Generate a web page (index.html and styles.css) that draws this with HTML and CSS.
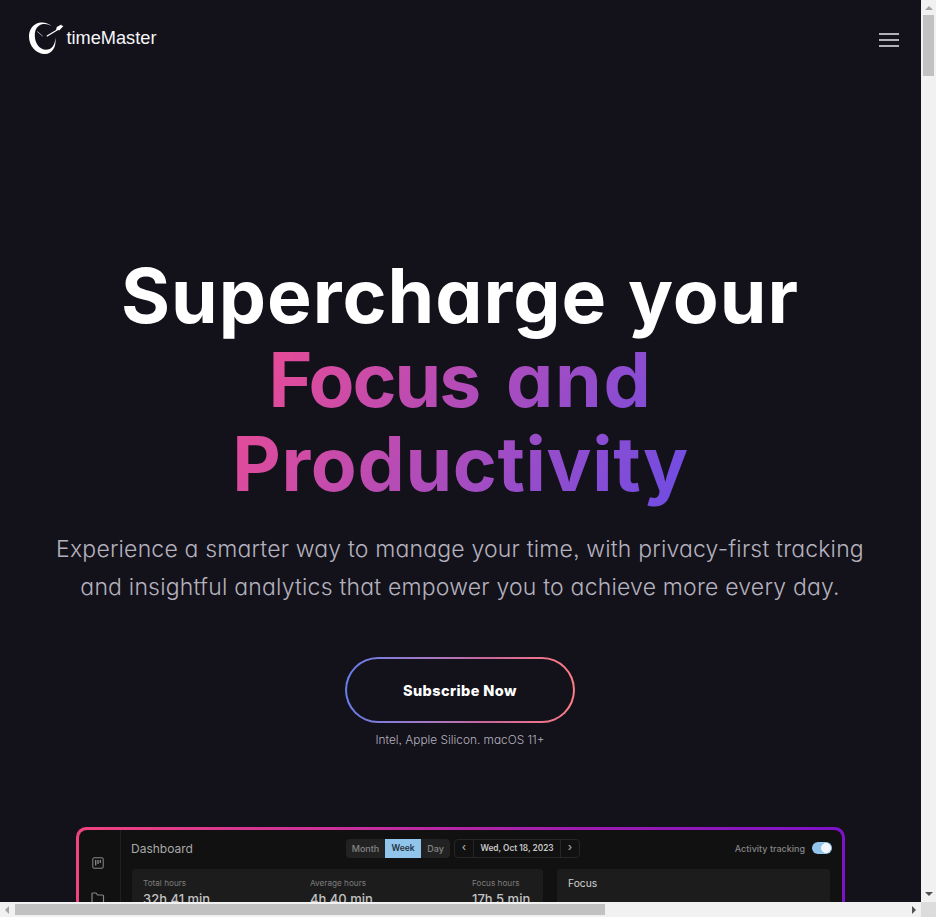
FILE: index.html
```html
<!DOCTYPE html>
<html lang="en">
<head>
<meta charset="utf-8">
<title>timeMaster</title>
<link rel="stylesheet" href="styles.css">
</head>
<body>
<main class="viewport">
  <header class="nav">
    <a class="brand">
      <svg class="mark" width="36" height="34" viewBox="0 0 36 34">
        <path d="M23.500 5.300C20 1.500 15 .8 11 1.800C4.500 3.500 1 9 1 15.500C1 25 8 33 17 33C24 33 28.800 26 27.300 16.500C27.300 24 23.500 28.800 18 28.800C11.500 28.800 6.800 22 6.800 14.500C6.800 8.500 9.500 4.500 14 3.300C17.500 2.400 20.500 3.300 23.500 5.300Z" fill="#fff"/>
        <path d="M18.700 15.300L29.500 8.800" stroke="#fff" stroke-width="1.300"/>
        <path d="M28 8.900L28.800 6L33.300 3.600L33.500 4.600L35.400 5L31.500 9.200Z" fill="#fff"/>
        <path d="M9.300 10.500L14.700 15.200" stroke="#a3a2a9" stroke-width="1"/>
      </svg>
      <span>timeMaster</span>
    </a>
    <div class="burger"><i></i><i></i><i></i></div>
  </header>
  <section class="hero">
    <h1><span class="line l1">Supercharge your</span><span class="grad"><span class="line l2"><span class="tight">Focus</span> <span class="loose">and</span></span><span class="line l3">Productivity</span></span></h1>
    <p class="lead"><span class="p1">Experience a smarter way to manage your time, with privacy-first tracking</span><span class="p2">and insightful analytics that empower you to achieve more every day.</span></p>
    <a class="cta"><span>Subscribe Now</span></a>
    <p class="note"><span>Intel, Apple Silicon. macOS 11+</span></p>
  </section>
  <section class="shot">
    <div class="app">
      <aside class="side">
        <svg width="12" height="12" viewBox="0 0 12 12" fill="none" stroke="#8b8b8b"><rect x=".8" y=".8" width="10.400" height="10.400" rx="1"/><path d="M3.700 3v5.500M6 3v4M8.300 3v3" stroke-width="1.300"/></svg>
        <svg width="14" height="12" viewBox="0 0 14 12" fill="none" stroke="#858585" stroke-width="1.200"><path d="M1 11V2Q1 1 2 1H5L6.500 3H11.500Q12.500 3 12.500 4V11Z"/></svg>
      </aside>
      <div class="content">
        <div class="bar">
          <span class="title">Dashboard</span>
          <div class="tabs"><span>Month</span><span class="on">Week</span><span>Day</span></div>
          <div class="date"><span>‹</span><b>Wed, Oct 18, 2023</b><span>›</span></div>
          <span class="track">Activity tracking</span><i class="toggle"></i>
        </div>
        <div class="cards">
          <div class="card stats">
            <div><small>Total hours</small><strong>32h 41 min</strong></div>
            <div><small>Average hours</small><strong>4h 40 min</strong></div>
            <div><small>Focus hours</small><strong>17h 5 min</strong></div>
          </div>
          <div class="card focus">Focus</div>
        </div>
      </div>
    </div>
  </section>
</main>
<div class="vbar"><i class="up"></i><i class="vthumb"></i><i class="down"></i></div>
<div class="hbar"><i class="left"></i><i class="hthumb"></i><i class="right"></i></div>
<div class="corner"></div>
</body>
</html>
```
FILE: styles.css
```css
* { box-sizing: border-box; }
body { margin: 0; width: 936px; height: 917px; overflow: hidden; display: grid; grid-template: 902px 15px / 921px 15px; background: #13111a; color: #fff; font-family: Inter, "Liberation Sans", sans-serif; }
.viewport { overflow: hidden; background: #13111a; display: flex; flex-direction: column; }
.nav { flex: none; height: 76px; padding: 0 22px 0 28px; display: flex; justify-content: space-between; align-items: center; }
.brand { display: flex; align-items: center; gap: 2.500px; font: 18.200px "Liberation Sans", sans-serif; }
.brand span { color: #f6f6f8; }
.mark { display: block; }
.burger { display: flex; flex-direction: column; gap: 4px; margin-top: 4px; }
.burger i { width: 20px; height: 2px; background: #b2afbd; }
.hero { flex: none; height: 751px; padding: 178px 1px 0 0; display: flex; flex-direction: column; align-items: center; font-feature-settings: "cv11", "ss03"; }
h1 { margin: 0; font-size: 75px; line-height: 84px; font-weight: 700; display: flex; flex-direction: column; align-items: center; white-space: nowrap; }
.line { display: block; }
.l1 { letter-spacing: 1px; word-spacing: 2px; }
.l2 { word-spacing: 9px; margin-left: 1px; }
.l3 { letter-spacing: 0.650px; margin-left: 1px; }
.tight { letter-spacing: -2px; }
.loose { letter-spacing: 1.700px; }
.grad { width: 455px; display: flex; flex-direction: column; align-items: center; background: linear-gradient(120deg, #ea4b94 5%, #6b4de6 100%); -webkit-background-clip: text; background-clip: text; color: transparent; padding-bottom: 12px; }
.lead { margin: 12px 0 0; font-size: 23px; line-height: 38px; font-weight: 300; color: #b4b1be; text-align: center; white-space: nowrap; }
.lead span { display: block; }
.p1 { letter-spacing: 0.180px; }
.p2 { letter-spacing: 0.200px; }
.cta { margin-top: 51px; width: 230px; height: 66px; border: 2px solid transparent; border-radius: 33px; background: linear-gradient(#13111a, #13111a) padding-box, linear-gradient(90deg, #667eea, #a978c0 40%, #ca6599 62%, #ff7e86) border-box; display: flex; align-items: center; justify-content: center; font-size: 14.500px; font-weight: 800; letter-spacing: 0.400px; }
.note { margin: 7px 0 0; font-size: 11.850px; line-height: 20px; font-weight: 300; color: #b4b1be; }
.shot { flex: none; width: 769px; height: 90px; margin-left: 76px; padding: 3px 3px 0; border-radius: 10px 10px 0 0; background: linear-gradient(90deg, #f0437f, #c22da0 40%, #9f1bb0 65%, #7d12c8); }
.app { height: 87px; border-radius: 8px 8px 0 0; background: #111; display: flex; overflow: hidden; }
.side { width: 42px; border-right: 1px solid #202020; padding-top: 27px; display: flex; flex-direction: column; align-items: center; gap: 23px; padding-right: 4px; }
.content { flex: 1; padding: 8px 12px 0 11px; }
.bar { height: 20px; display: flex; align-items: center; font-size: 9px; font-weight: 500; color: #858585; white-space: nowrap; }
.title { width: 214px; font-size: 12px; font-weight: 400; color: #a8a8a8; margin-left: -1px; margin-right: 1px; }
.tabs { display: flex; height: 19px; border-radius: 4px; background: #222; overflow: hidden; line-height: 19px; text-align: center; }
.tabs span { width: 39px; }
.tabs .on { width: 36px; background: #91c5ec; color: #24313b; font-weight: 600; font-size: 8.500px; }
.tabs span:last-child { width: 29px; }
.date { margin-left: 4px; width: 126px; height: 19px; border: 1px solid #262626; border-radius: 4px; display: flex; line-height: 17px; text-align: center; }
.date span { width: 18px; font-size: 11px; line-height: 15px; color: #aaa; }
.date b { flex: 1; border: solid #262626; border-width: 0 1px; color: #c8c8c8; font-weight: 600; font-size: 8.300px; }
.track { margin-left: auto; }
.toggle { width: 20px; height: 12px; margin: 0 -2px 0 7px; border-radius: 6px; background: radial-gradient(circle at 14px 6px, #f2f6fa 4.700px, #91c5ec 5.200px); }
.cards { display: flex; gap: 14px; margin-top: 11px; }
.card { height: 60px; background: #1c1c1c; border-radius: 3px; }
.stats { width: 411px; padding: 9px 11px; display: grid; grid-template-columns: 167px 162px 1fr; white-space: nowrap; }
.stats small { display: block; font-size: 8.200px; line-height: 10px; color: #7e7e7e; }
.stats strong { display: block; margin-top: 3px; font-size: 13px; line-height: 16px; font-weight: 500; color: #c2c2c2; }
.focus { flex: 1; padding: 8px 11px; font-size: 10.300px; line-height: 13px; color: #d2d2d2; }
.vbar, .hbar { background: #f1f1f1; display: flex; align-items: center; }
.vbar { flex-direction: column; }
.vbar i, .hbar i { display: block; }
.vthumb { width: 11px; height: 61px; margin-top: 5px; background: #c1c1c1; }
.up { margin-top: 6px; border: solid transparent; border-width: 0 4px 4px; border-bottom-color: #a3a3a3; }
.down { margin-top: auto; margin-bottom: 6px; border: solid transparent; border-width: 4px 4px 0; border-top-color: #505050; }
.hthumb { height: 11px; width: 590px; margin-left: 6px; background: #c1c1c1; }
.left { margin-left: 5px; border: solid transparent; border-width: 4px 4px 4px 0; border-right-color: #a3a3a3; }
.right { margin-left: auto; margin-right: 5px; border: solid transparent; border-width: 4px 0 4px 4px; border-left-color: #505050; }
.corner { background: #dcdcdc; }
```
